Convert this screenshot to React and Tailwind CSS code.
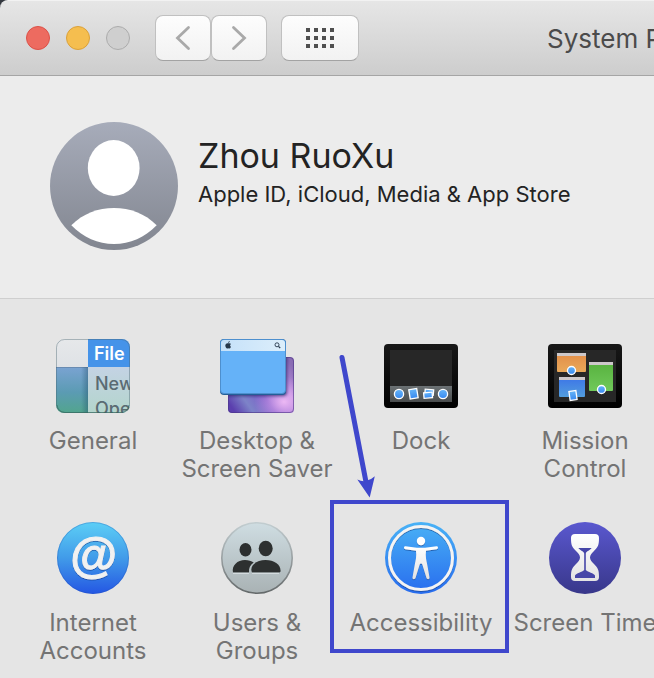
import React from "react";

function GeneralIcon() {
  return (
    <svg width="74" height="74" viewBox="0 0 74 74" aria-hidden="true">
      <defs>
        <linearGradient id="gen-side" x1="0" y1="0" x2="0" y2="1">
          <stop offset="0" stopColor="#7aa3d2" />
          <stop offset="0.55" stopColor="#5b9bb3" />
          <stop offset="1" stopColor="#52a58d" />
        </linearGradient>
        <linearGradient id="gen-menu" x1="0" y1="0" x2="0" y2="1">
          <stop offset="0" stopColor="#c4d3e4" />
          <stop offset="1" stopColor="#b3d5cc" />
        </linearGradient>
        <linearGradient id="gen-top" x1="0" y1="0" x2="0" y2="1">
          <stop offset="0" stopColor="#e6e8ea" />
          <stop offset="1" stopColor="#dfe2e6" />
        </linearGradient>
        <linearGradient id="gen-shade" x1="0" y1="0" x2="1" y2="0">
          <stop offset="0" stopColor="#1d4b66" stopOpacity="0" />
          <stop offset="1" stopColor="#1d4b66" stopOpacity="0.4" />
        </linearGradient>
        <clipPath id="gen-clip">
          <rect width="74" height="74" rx="8" />
        </clipPath>
      </defs>
      <g clipPath="url(#gen-clip)">
        <rect width="32" height="28" fill="url(#gen-top)" />
        <rect y="28" width="32" height="46" fill="url(#gen-side)" />
        <rect y="28" width="32" height="1" fill="#5d7c9c" opacity="0.6" />
        <rect x="25" y="28" width="7" height="46" fill="url(#gen-shade)" />
        <rect x="32" width="42" height="28" fill="#4593e9" />
        <rect x="32" y="28" width="42" height="46" fill="url(#gen-menu)" />
        <g fontFamily="Inter, 'Liberation Sans', sans-serif" fontSize="18">
          <text x="38" y="21" fill="#ffffff" fontWeight="600">File</text>
          <text x="39" y="51" fill="#5a6b73" fontWeight="500">New</text>
          <text x="39" y="76" fill="#5a6b73" fontWeight="500">Ope</text>
        </g>
      </g>
      <rect x="0.5" y="0.5" width="73" height="73" rx="8" fill="none" stroke="#45616c" strokeOpacity="0.4" />
      <path d="M1 66q1 7 8 7.500h56q7-.5 8-7.500" fill="none" stroke="#2f6659" strokeOpacity="0.55" />
    </svg>
  );
}

function DesktopIcon() {
  return (
    <svg width="74" height="74" viewBox="0 0 74 74" aria-hidden="true">
      <defs>
        <linearGradient id="desk-back" x1="0" y1="0.8" x2="1" y2="0.2">
          <stop offset="0" stopColor="#5b3fae" />
          <stop offset="0.2" stopColor="#7d83c8" />
          <stop offset="0.45" stopColor="#7b5cc8" />
          <stop offset="0.75" stopColor="#b98ddd" />
          <stop offset="1" stopColor="#8a6cb4" />
        </linearGradient>
        <radialGradient id="desk-glow" cx="0.85" cy="0.8" r="0.45">
          <stop offset="0" stopColor="#ecb8f4" />
          <stop offset="1" stopColor="#d59aea" stopOpacity="0" />
        </radialGradient>
        <linearGradient id="desk-bar" x1="0" y1="0" x2="1" y2="0">
          <stop offset="0" stopColor="#c5e1f9" />
          <stop offset="1" stopColor="#dceefb" />
        </linearGradient>
        <filter id="desk-blur" x="-20%" y="-20%" width="140%" height="140%">
          <feGaussianBlur stdDeviation="1.5" />
        </filter>
        <clipPath id="desk-clip">
          <rect x="8" y="18" width="66" height="56" rx="4" />
        </clipPath>
      </defs>
      <rect x="8" y="18" width="66" height="56" rx="4" fill="url(#desk-back)" />
      <rect x="8" y="18" width="66" height="56" rx="4" fill="url(#desk-glow)" />
      <g clipPath="url(#desk-clip)">
        <rect x="1" y="2" width="66" height="55" rx="4" fill="#1f1c60" opacity="0.7" filter="url(#desk-blur)" />
      </g>
      <rect x="8.500" y="18.500" width="65" height="55" rx="3.500" fill="none" stroke="#4b3585" strokeOpacity="0.6" />
      <rect width="66" height="56" rx="4" fill="#235f98" />
      <rect x="0.5" y="0.5" width="65" height="54" rx="3.500" fill="#65b2f8" stroke="#4d8fce" />
      <path d="M1 12V4q0-3 3-3h58q3 0 3 3v8z" fill="url(#desk-bar)" />
      <path d="M8.300 4.300c-1.700-.5-3 .6-3 2.300 0 1.500 1 2.900 1.900 2.900.5 0 .6-.3 1.100-.3s.6.3 1.100.3c.7 0 1.300-.9 1.600-1.700-1.200-.7-1.200-2.200.1-2.800-.8-1-1.900-.8-2.800-.7zM8.200 4c0-1 .6-1.700 1.500-1.900.1 1-.6 1.800-1.500 1.900z" fill="#26384b" />
      <circle cx="57" cy="5.800" r="2" fill="none" stroke="#26384b" strokeWidth="0.900" />
      <path d="m58.500 7.300 1.700 1.700" stroke="#26384b" strokeWidth="1.200" />
    </svg>
  );
}

function ScreenFrame({ id, children }) {
  return (
    <svg width="74" height="64" viewBox="0 0 74 64" aria-hidden="true">
      <defs>
        <linearGradient id={id + "-frame"} x1="0" y1="0" x2="0" y2="1">
          <stop offset="0" stopColor="#181818" />
          <stop offset="1" stopColor="#000000" />
        </linearGradient>
        <linearGradient id={id + "-dot"} x1="0" y1="0" x2="0" y2="1">
          <stop offset="0" stopColor="#66b5f8" />
          <stop offset="1" stopColor="#3788f0" />
        </linearGradient>
      </defs>
      <rect width="74" height="64" rx="4" fill={"url(#" + id + "-frame)"} />
      <rect x="6" y="6" width="62" height="52" fill="#272727" />
      {children}
    </svg>
  );
}

function DockIcon() {
  return (
    <ScreenFrame id="dock">
      <defs>
        <linearGradient id="dock-shelf" x1="0" y1="0" x2="0" y2="1">
          <stop offset="0" stopColor="#6c7275" />
          <stop offset="1" stopColor="#494c4d" />
        </linearGradient>
      </defs>
      <rect x="6" y="42" width="62" height="16" fill="url(#dock-shelf)" />
      <g fill="url(#dock-dot)" stroke="#ffffff" strokeWidth="1.300">
        <circle cx="15" cy="50" r="4.600" />
        <rect x="25.500" y="45" width="8" height="9.500" transform="rotate(-9 29.500 50)" />
        <rect x="41" y="45.500" width="8.500" height="5.500" transform="rotate(5 45 48)" />
        <rect x="39.800" y="48.500" width="8.500" height="5.500" transform="rotate(-5 44 51)" />
        <circle cx="59" cy="50" r="4.600" />
      </g>
    </ScreenFrame>
  );
}

function MissionIcon() {
  return (
    <ScreenFrame id="mission">
      <defs>
        <linearGradient id="mission-orange" x1="0" y1="0" x2="0" y2="1">
          <stop offset="0" stopColor="#e28d48" />
          <stop offset="1" stopColor="#e9a95a" />
        </linearGradient>
        <linearGradient id="mission-green" x1="0" y1="0" x2="0" y2="1">
          <stop offset="0" stopColor="#57b13e" />
          <stop offset="1" stopColor="#70c95a" />
        </linearGradient>
        <linearGradient id="mission-blue" x1="0" y1="0" x2="0" y2="1">
          <stop offset="0" stopColor="#3c74e8" />
          <stop offset="1" stopColor="#529ddd" />
        </linearGradient>
      </defs>
      <rect x="9" y="9" width="29" height="19" rx="1" fill="url(#mission-orange)" />
      <rect x="9" y="9" width="29" height="3" fill="#cdc8ca" />
      <rect x="41" y="18" width="24" height="29" rx="1" fill="url(#mission-green)" />
      <rect x="41" y="18" width="24" height="3" fill="#cdc8ca" />
      <rect x="11" y="33" width="26" height="20" rx="1" fill="url(#mission-blue)" />
      <rect x="11" y="33" width="26" height="3" fill="#cdc8ca" />
      <g fill="url(#mission-dot)" stroke="#ffffff" strokeWidth="1.300">
        <circle cx="23.500" cy="26.500" r="4" />
        <circle cx="53.500" cy="45.500" r="4" />
        <rect x="21.500" y="47" width="7" height="9" transform="rotate(-8 25 51.500)" />
      </g>
    </ScreenFrame>
  );
}

function InternetIcon() {
  return (
    <svg width="72" height="72" viewBox="0 0 72 72" aria-hidden="true">
      <defs>
        <linearGradient id="net-bg" x1="0" y1="0" x2="0" y2="1">
          <stop offset="0" stopColor="#5ccff6" />
          <stop offset="0.5" stopColor="#419be9" />
          <stop offset="1" stopColor="#2456e3" />
        </linearGradient>
        <filter id="net-shadow" x="-20%" y="-20%" width="140%" height="140%">
          <feDropShadow dx="0" dy="1" stdDeviation="0.700" floodColor="#143c8c" floodOpacity="0.6" />
        </filter>
      </defs>
      <circle cx="36" cy="36" r="36" fill="url(#net-bg)" />
      <circle cx="36" cy="36" r="35.500" fill="none" stroke="#234fae" strokeOpacity="0.3" />
      <text x="36" y="50" textAnchor="middle" fill="#f1f1f1" stroke="#f1f1f1" strokeWidth="1" fontFamily="'Liberation Sans', sans-serif" fontStyle="italic" fontWeight="700" fontSize="48" filter="url(#net-shadow)">@</text>
    </svg>
  );
}

function UsersIcon() {
  return (
    <svg width="72" height="72" viewBox="0 0 72 72" aria-hidden="true">
      <defs>
        <linearGradient id="users-bg" x1="0" y1="0" x2="0" y2="1">
          <stop offset="0" stopColor="#cfdde2" />
          <stop offset="1" stopColor="#a9b2b4" />
        </linearGradient>
        <linearGradient id="users-ring" x1="0" y1="0" x2="0" y2="1">
          <stop offset="0" stopColor="#c2cdd0" />
          <stop offset="0.5" stopColor="#99a0a2" />
          <stop offset="1" stopColor="#64696a" />
        </linearGradient>
      </defs>
      <circle cx="36" cy="36" r="35.200" fill="url(#users-bg)" stroke="url(#users-ring)" strokeWidth="1.600" />
      <g fill="#2d3030">
        <ellipse cx="24.500" cy="27.800" rx="6" ry="6.800" />
        <path d="M12 50.500c-1.500-7 4.500-12.500 12-12.500 3.500 0 6.500.9 8.700 2.600-3.600 2.300-5 5.500-4.700 9.900z" />
        <ellipse cx="44.700" cy="26.500" rx="7" ry="7.700" />
        <path d="M31 50.500c-3-6.800 4.700-12.500 13.500-12.500 9 0 15.700 5 15 11.500q-.2 1-1.500 1z" />
      </g>
      <path d="M12 51.300h16M31 51.300h27" stroke="#dce3e5" strokeWidth="1" />
    </svg>
  );
}

function AccessibilityIcon() {
  return (
    <svg width="72" height="72" viewBox="0 0 72 72" aria-hidden="true">
      <defs>
        <linearGradient id="acc-bg" x1="0" y1="0" x2="0" y2="1">
          <stop offset="0" stopColor="#49b2f6" />
          <stop offset="1" stopColor="#286cee" />
        </linearGradient>
        <linearGradient id="acc-fg" x1="0" y1="0" x2="0" y2="1">
          <stop offset="0" stopColor="#ffffff" />
          <stop offset="1" stopColor="#e2e2e2" />
        </linearGradient>
        <filter id="acc-shadow" x="-20%" y="-20%" width="140%" height="140%">
          <feDropShadow dx="0" dy="1" stdDeviation="0.700" floodColor="#113a80" floodOpacity="0.6" />
        </filter>
      </defs>
      <circle cx="36" cy="36" r="36" fill="url(#acc-bg)" />
      <g filter="url(#acc-shadow)">
        <circle cx="36" cy="36" r="31.500" fill="none" stroke="#f4f4f4" strokeWidth="3" />
        <circle cx="36" cy="19" r="4.200" fill="#ffffff" />
        <path d="M20.500 24.200c5 .9 10 1.500 15.500 1.500s10.500-.6 15.500-1.500c1.800-.2 2 2.500.3 3-3.500.7-7.300 1-10.800 1.600-.7 5.200.2 9.200 1.300 14.200l2.200 12.500c.2 1.900-2.300 2.300-3 .5l-4.200-13.500c-.4-1.500-2.200-1.500-2.600 0L30.500 56c-.7 1.800-3.200 1.400-3-.5L29.700 43c1.100-5 2-9 1.300-14.200-3.500-.6-7.300-.9-10.800-1.600-1.700-.5-1.500-3.200.3-3z" fill="url(#acc-fg)" />
      </g>
    </svg>
  );
}

function ScreenTimeIcon() {
  return (
    <svg width="72" height="72" viewBox="0 0 72 72" aria-hidden="true">
      <defs>
        <linearGradient id="time-bg" x1="0" y1="0" x2="0" y2="1">
          <stop offset="0" stopColor="#5a58cf" />
          <stop offset="1" stopColor="#38378a" />
        </linearGradient>
        <linearGradient id="time-fg" x1="0" y1="0" x2="0" y2="1">
          <stop offset="0" stopColor="#ffffff" />
          <stop offset="1" stopColor="#e3e3e3" />
        </linearGradient>
      </defs>
      <circle cx="36" cy="36" r="36" fill="url(#time-bg)" />
      <path d="M26 12h20q4 0 4 4c0 7-1 9-5 13-2 2-4 4-4 6.500s2 4.500 4 6.500c4 4 5 6 5 13q0 4-4 4H26q-4 0-4-4c0-7 1-9 5-13 2-2 4-4 4-6.500S29 31 27 29c-4-4-5-6-5-13q0-4 4-4z" fill="url(#time-fg)" />
      <path d="M29.500 26h13c-.5 1.700-5.700 3.500-5.700 5.500V48c2 2.200 8.200 3 9.200 5.500V56H26v-2.500c1-2.500 7.200-3.300 9.200-5.500V31.500c0-2-5.200-3.800-5.700-5.500z" fill="#4646a8" />
    </svg>
  );
}

const panes = [
  { label: "General", icon: GeneralIcon },
  { label: "Desktop & Screen Saver", icon: DesktopIcon },
  { label: "Dock", icon: DockIcon },
  { label: "Mission Control", icon: MissionIcon },
  { label: "Internet Accounts", icon: InternetIcon },
  { label: "Users & Groups", icon: UsersIcon },
  { label: "Accessibility", icon: AccessibilityIcon, marked: true },
  { label: "Screen Time", icon: ScreenTimeIcon },
];

const toolButton =
  "flex h-[46px] items-center justify-center rounded-lg border border-[#c0c0c0] border-b-[#a3a3a3] bg-linear-to-b from-[#fdfdfd] to-[#f2f2f2]";

function Toolbar() {
  return (
    <header className="flex h-[76px] items-center overflow-hidden rounded-tl-lg border-t border-b border-t-[#f2f2f2] border-b-[#a5a5a5] bg-linear-to-b from-[#e6e6e6] to-[#cdcdcd] pl-[26px]">
      <div className="flex shrink-0 gap-4">
        <button aria-label="Close" className="size-6 rounded-full border border-[#dc5148] bg-[#ed6b60]" />
        <button aria-label="Minimize" className="size-6 rounded-full border border-[#dba13a] bg-[#f5be4f]" />
        <button aria-label="Zoom" className="size-6 rounded-full border border-[#acacac] bg-[#cfcfcf]" />
      </div>
      <nav className="ml-[25px] flex shrink-0">
        <button aria-label="Back" className={toolButton + " w-14"}>
          <svg width="16" height="26" viewBox="0 0 16 26" fill="none" stroke="#a9a9a9" strokeWidth="2.800" strokeLinecap="round">
            <path d="M13.500 2.500 2.500 13l11 10.500" />
          </svg>
        </button>
        <button aria-label="Forward" className={toolButton + " w-14"}>
          <svg width="16" height="26" viewBox="0 0 16 26" fill="none" stroke="#a9a9a9" strokeWidth="2.800" strokeLinecap="round">
            <path d="m2.500 2.500 11 10.500-11 10.500" />
          </svg>
        </button>
        <button aria-label="Show All" className={toolButton + " ml-[14px] w-[78px]"}>
          <svg width="28" height="20" viewBox="0 0 28 20" fill="#4f4f4f">
            {[0, 8, 16].map((y) =>
              [0, 8, 16, 24].map((x) => <rect key={x + "-" + y} x={x} y={y} width="4" height="4" />)
            )}
          </svg>
        </button>
      </nav>
      <h1 className="ml-[188px] shrink-0 pt-0.5 text-[26px] leading-8 whitespace-nowrap text-[#4b4b4b]">System Preferences</h1>
    </header>
  );
}

function Profile() {
  return (
    <section className="flex h-[223px] items-start border-b border-[#cfcfcf] bg-[#ececec] pt-[46px] pl-[50px]">
      <svg width="128" height="128" viewBox="0 0 128 128" className="shrink-0" role="img" aria-label="Account picture">
        <defs>
          <linearGradient id="avatar-bg" x1="0" y1="0" x2="0" y2="1">
            <stop offset="0" stopColor="#a7acba" />
            <stop offset="1" stopColor="#828690" />
          </linearGradient>
        </defs>
        <circle cx="64" cy="64" r="64" fill="url(#avatar-bg)" />
        <ellipse cx="63.700" cy="46" rx="25.900" ry="28" fill="#ffffff" />
        <path d="M21.300 103.300C33 91.500 48 86 64 86s31 5.500 42.700 17.300C95 115.500 80 122 64 122s-31-6.500-42.700-18.700z" fill="#ffffff" />
      </svg>
      <div className="pt-3 pl-5 whitespace-nowrap text-[#232323]">
        <h2 className="text-[34px] leading-[44px]">Zhou RuoXu</h2>
        <p className="text-[22px] leading-8">Apple ID, iCloud, Media &amp; App Store</p>
      </div>
    </section>
  );
}

function Callout() {
  return (
    <>
      <span className="pointer-events-none absolute -top-[18px] left-[-9px] box-border h-[153px] w-[179px] border-4 border-[#3f47cc]" />
      <svg className="pointer-events-none absolute -top-[164px] left-0" width="40" height="146" viewBox="0 0 40 146" aria-hidden="true">
        <path d="M3 3.500 27 128" stroke="#3f47cc" strokeWidth="5" strokeLinecap="round" />
        <path d="M30.700 143.500 18.300 125.500q5 2.500 8.500 1.500 5-1 9-4.800z" fill="#3f47cc" />
      </svg>
    </>
  );
}

export default function App() {
  return (
    <div className="min-h-screen overflow-hidden bg-[#e5e5e5] font-['Inter','Liberation_Sans',sans-serif]">
      <div className="bg-[#34383f]">
        <Toolbar />
      </div>
      <Profile />
      <main className="grid grid-cols-[repeat(4,164px)] gap-y-[34px] pt-[37px] pl-[11px]">
        {panes.map(({ label, icon: Icon, marked }) => (
          <div key={label} className="relative">
            <a href="#" className="flex min-h-[148px] flex-col items-center gap-[11px] text-center text-[24px] leading-7 text-[#747474]">
              <span className="flex h-20 items-center justify-center">
                <Icon />
              </span>
              <span className="w-40">{label}</span>
            </a>
            {marked && <Callout />}
          </div>
        ))}
      </main>
    </div>
  );
}
